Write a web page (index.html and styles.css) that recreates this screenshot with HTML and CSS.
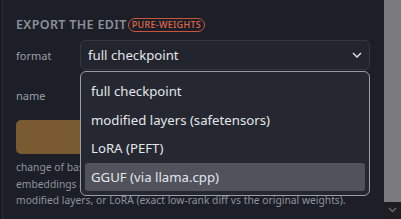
FILE: index.html
```html
<!DOCTYPE html>
<html lang="en">
<head>
    <meta charset="UTF-8">
    <meta name="viewport" content="width=device-width, initial-scale=1.0">
    <title>Export the edit</title>
    <link rel="stylesheet" href="styles.css">
</head>
<body>
    <div class="frame">
        <div class="panel">
            <h2 class="title">EXPORT THE EDIT<span class="badge">PURE-WEIGHTS</span></h2>

            <div class="field">
                <label class="label">format</label>
                <div class="select">
                    <span>full checkpoint</span>
                    <svg class="chev" width="10" height="6" viewBox="0 0 10 6"><path d="M1 1l4 4 4-4" fill="none" stroke="#d8dbe2" stroke-width="1.5"/></svg>
                </div>
            </div>

            <div class="field">
                <label class="label">name</label>
                <div class="input"></div>
            </div>

            <button class="export">export</button>

            <p class="help">change of basis only, no hooks are kept. Tied<br>embeddings are handled. Save a full checkpoint, only the<br>modified layers, or LoRA (exact low-rank diff vs the original weights).</p>

            <ul class="menu">
                <li>full checkpoint</li>
                <li>modified layers (safetensors)</li>
                <li>LoRA (PEFT)</li>
                <li class="active">GGUF (via llama.cpp)</li>
            </ul>
        </div>
        <div class="scrollbar">
            <div class="thumb"></div>
            <div class="arrow">
                <svg width="9" height="6" viewBox="0 0 9 6"><path d="M1 1l3.5 3.5L8 1" fill="none" stroke="#6a6b70" stroke-width="1.4"/></svg>
            </div>
        </div>
    </div>
</body>
</html>
```

FILE: styles.css
```css
body {
    margin: 0;
    background-color: #181b22;
    font-family: "Noto Sans", "Open Sans", sans-serif;
    overflow: hidden;
}
.frame {
    display: flex;
    height: 219px;
}
.panel {
    position: relative;
    flex: 1;
    margin-left: 2px;
    border-left: 1px solid #2a2d36;
    background-color: #1c1f27;
    padding: 17px 14px 0 13px;
    overflow: hidden;
}
.title {
    margin: 0 0 7px 0;
    font-size: 12.5px;
    font-weight: 600;
    letter-spacing: 0.35px;
    color: #8b909b;
    line-height: 16px;
    display: flex;
    align-items: center;
}
.badge {
    margin-left: 1px;
    border: 1px solid #c9553c;
    border-radius: 7px;
    padding: 0 3px;
    font-size: 9px;
    letter-spacing: 0.3px;
    font-weight: 500;
    color: #e2684c;
    line-height: 12px;
}
.field {
    display: flex;
    align-items: center;
    height: 30px;
    margin-bottom: 10px;
}
.label {
    width: 64px;
    font-size: 11px;
    color: #989ea8;
}
.select, .input {
    flex: 1;
    height: 28px;
    border: 1px solid #343742;
    border-radius: 5px;
    background-color: #22252e;
    display: flex;
    align-items: center;
    justify-content: space-between;
    padding: 0 7px;
    font-size: 13.2px;
    color: #e4e6eb;
}
.export {
    display: block;
    width: 100%;
    height: 34px;
    margin-top: 7px;
    border: none;
    border-radius: 5px;
    background-color: #7a5a30;
    color: #1c1f27;
    font-size: 13px;
}
.help {
    margin: 5px 0 0 0;
    font-size: 10.3px;
    line-height: 16.5px;
    color: #8e939d;
    white-space: nowrap;
}
.menu {
    position: absolute;
    top: 71px;
    left: 77px;
    width: 280px;
    margin: 0;
    padding: 5px 4px 4px 4px;
    list-style: none;
    border: 1px solid #9a9ca6;
    border-radius: 6px;
    background-color: #252830;
}
.menu li {
    height: 28px;
    line-height: 29px;
    padding: 0 6px;
    margin-bottom: 0.6px;
    font-size: 13.2px;
    color: #e4e6eb;
    border-radius: 3px;
}
.menu li.active {
    background-color: #50525c;
}
.scrollbar {
    width: 17px;
    display: flex;
    flex-direction: column;
    background-color: #1e1e21;
}
.thumb {
    height: 204px;
    background-color: #7b7b7e;
}
.arrow {
    height: 17px;
    display: flex;
    justify-content: center;
    padding-top: 5px;
    box-sizing: border-box;
}
```
